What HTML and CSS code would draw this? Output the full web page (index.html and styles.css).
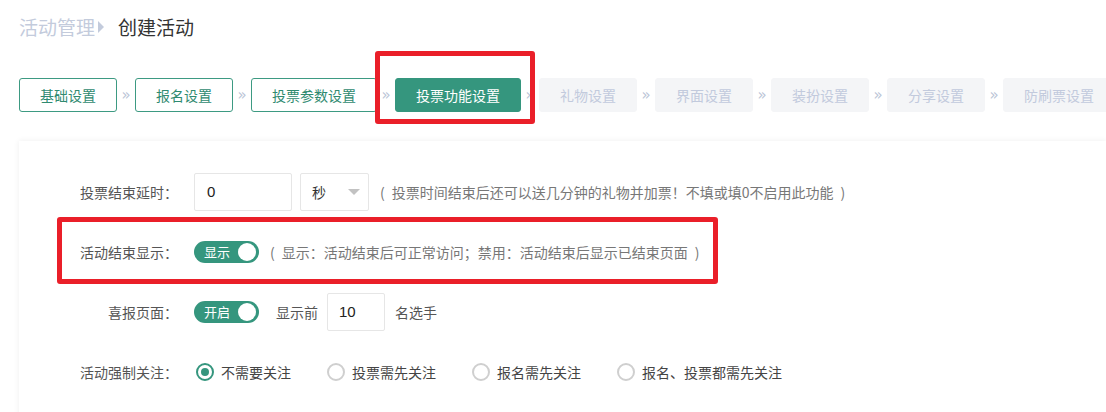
FILE: index.html
```html
<!DOCTYPE html>
<html lang="zh-CN">
<head>
<meta charset="utf-8">
<title>创建活动</title>
<link rel="stylesheet" href="styles.css">
</head>
<body>
<div class="page">
  <div class="crumb">
    <span class="crumb-parent">活动管理</span>
    <span class="crumb-arrow"></span>
    <span class="crumb-current">创建活动</span>
  </div>

  <div class="steps">
    <div class="step done">基础设置</div>
    <span class="chev">»</span>
    <div class="step done">报名设置</div>
    <span class="chev">»</span>
    <div class="step done">投票参数设置</div>
    <span class="chev">»</span>
    <div class="step active">投票功能设置</div>
    <span class="chev">»</span>
    <div class="step todo">礼物设置</div>
    <span class="chev">»</span>
    <div class="step todo">界面设置</div>
    <span class="chev">»</span>
    <div class="step todo">装扮设置</div>
    <span class="chev">»</span>
    <div class="step todo">分享设置</div>
    <span class="chev">»</span>
    <div class="step todo">防刷票设置</div>
  </div>

  <div class="panel">
    <div class="row">
      <label class="label">投票结束延时：</label>
      <div class="input w98">0</div>
      <div class="select">秒<span class="caret"></span></div>
      <span class="hint">(&ensp;投票时间结束后还可以送几分钟的礼物并加票！不填或填0不启用此功能&ensp;)</span>
    </div>

    <div class="row">
      <label class="label">活动结束显示：</label>
      <div class="switch"><span class="switch-text">显示</span><span class="knob"></span></div>
      <span class="hint">(&ensp;显示：活动结束后可正常访问；禁用：活动结束后显示已结束页面&ensp;)</span>
    </div>

    <div class="row">
      <label class="label">喜报页面：</label>
      <div class="switch"><span class="switch-text">开启</span><span class="knob"></span></div>
      <span class="text lead">显示前</span>
      <div class="input w58">10</div>
      <span class="text trail">名选手</span>
    </div>

    <div class="row">
      <label class="label">活动强制关注：</label>
      <div class="radios">
        <span class="radio checked"><span class="dot"></span>不需要关注</span>
        <span class="radio"><span class="dot"></span>投票需先关注</span>
        <span class="radio"><span class="dot"></span>报名需先关注</span>
        <span class="radio"><span class="dot"></span>报名、投票都需先关注</span>
      </div>
    </div>
  </div>

  <div class="mark mark-step"></div>
  <div class="mark mark-row"></div>
</div>
</body>
</html>
```

FILE: styles.css
```css
html, body {
  margin: 0;
  padding: 0;
  background: #ffffff;
  overflow: hidden;
}

body {
  font-family: "Microsoft YaHei", "Noto Sans CJK SC", "Noto Sans", sans-serif;
  font-size: 14px;
  color: #555;
}

.page {
  position: relative;
  width: 1106px;
  height: 412px;
  padding-left: 19px;
  box-sizing: border-box;
  overflow: hidden;
}

/* breadcrumb */
.crumb {
  display: flex;
  align-items: center;
  height: 24px;
  padding-top: 15px;
  font-size: 19px;
  line-height: 24px;
}
.crumb-parent { color: #c3cbdc; }
.crumb-arrow {
  width: 0;
  height: 0;
  border-left: 6px solid #c3cbdc;
  border-top: 6px solid transparent;
  border-bottom: 6px solid transparent;
  margin: 0 14px 0 3px;
}
.crumb-current { color: #333; }

/* steps */
.steps {
  display: flex;
  align-items: center;
  margin-top: 39px;
  white-space: nowrap;
}
.step {
  flex: none;
  height: 32px;
  line-height: 32px;
  padding: 0 20px;
  border: 1px solid transparent;
  border-radius: 3px;
  font-size: 14px;
}
.step.done {
  border-color: #3d9a82;
  color: #2f8a70;
  background: #fff;
}
.step.active {
  border-color: #35967e;
  background: #35967e;
  color: #fff;
}
.step.todo {
  background: #f4f5f7;
  border-color: #f4f5f7;
  color: #c2cadd;
}
.chev {
  flex: none;
  width: 18px;
  text-align: center;
  font-family: "DejaVu Sans", sans-serif;
  font-size: 15px;
  color: #bac4d6;
  line-height: 32px;
}

/* panel */
.panel {
  margin-top: 29px;
  height: 280px;
  background: #fff;
  box-shadow: 0 0 6px rgba(0, 0, 0, 0.07);
  padding-top: 32px;
  box-sizing: border-box;
}
.row {
  display: flex;
  align-items: center;
  height: 38px;
  margin-bottom: 22px;
}
.label {
  flex: none;
  width: 159px;
  text-align: right;
  color: #555;
  margin-right: 16px;
  white-space: nowrap;
}
.input {
  flex: none;
  box-sizing: border-box;
  height: 38px;
  line-height: 36px;
  border: 1px solid #e6e6e6;
  border-radius: 2px;
  padding: 0 12px;
  color: #222;
  font-family: "Liberation Sans", "Noto Sans CJK SC", sans-serif;
  font-size: 15px;
}
.w98 { width: 98px; }
.w58 { width: 58px; padding-left: 11px; }
.select {
  flex: none;
  position: relative;
  box-sizing: border-box;
  width: 69px;
  height: 38px;
  line-height: 36px;
  margin-left: 8px;
  border: 1px solid #e6e6e6;
  border-radius: 2px;
  padding-left: 11px;
  color: #333;
}
.caret {
  position: absolute;
  right: 8px;
  top: 15px;
  width: 0;
  height: 0;
  border-left: 6px solid transparent;
  border-right: 6px solid transparent;
  border-top: 6px solid #c2c2c2;
}
.hint {
  margin-left: 11px;
  color: #777;
  white-space: nowrap;
}

.switch {
  flex: none;
  box-sizing: border-box;
  display: flex;
  align-items: center;
  justify-content: space-between;
  width: 65px;
  height: 22px;
  border-radius: 11px;
  background: #35967e;
  padding: 0 3px 0 10px;
}
.switch-text {
  color: #fff;
  font-size: 13px;
  line-height: 22px;
}
.knob {
  width: 18px;
  height: 18px;
  border-radius: 50%;
  background: #fff;
}
.text { color: #555; white-space: nowrap; }
.lead { margin-left: 17px; margin-right: 9px; }
.trail { margin-left: 10px; }

.radios {
  display: flex;
  align-items: center;
}
.radio {
  display: flex;
  align-items: center;
  color: #444;
  margin-right: 34px;
  white-space: nowrap;
}
.dot {
  box-sizing: border-box;
  width: 18px;
  height: 18px;
  border-radius: 50%;
  border: 2px solid #cfcfcf;
  margin-right: 7px;
  margin-left: 2px;
  display: flex;
  align-items: center;
  justify-content: center;
}
.radio.checked .dot { border-color: #35967e; }
.radio.checked .dot::after {
  content: "";
  width: 8px;
  height: 8px;
  border-radius: 50%;
  background: #35967e;
}

/* red annotation frames lying over content */
.mark {
  position: absolute;
  box-sizing: border-box;
  border: 5px solid #ea1f29;
  border-radius: 3px;
  pointer-events: none;
}
.mark-step {
  left: 375px;
  top: 51px;
  width: 160px;
  height: 73px;
}
.mark-row {
  left: 57px;
  top: 217px;
  width: 661px;
  height: 67px;
}
```
